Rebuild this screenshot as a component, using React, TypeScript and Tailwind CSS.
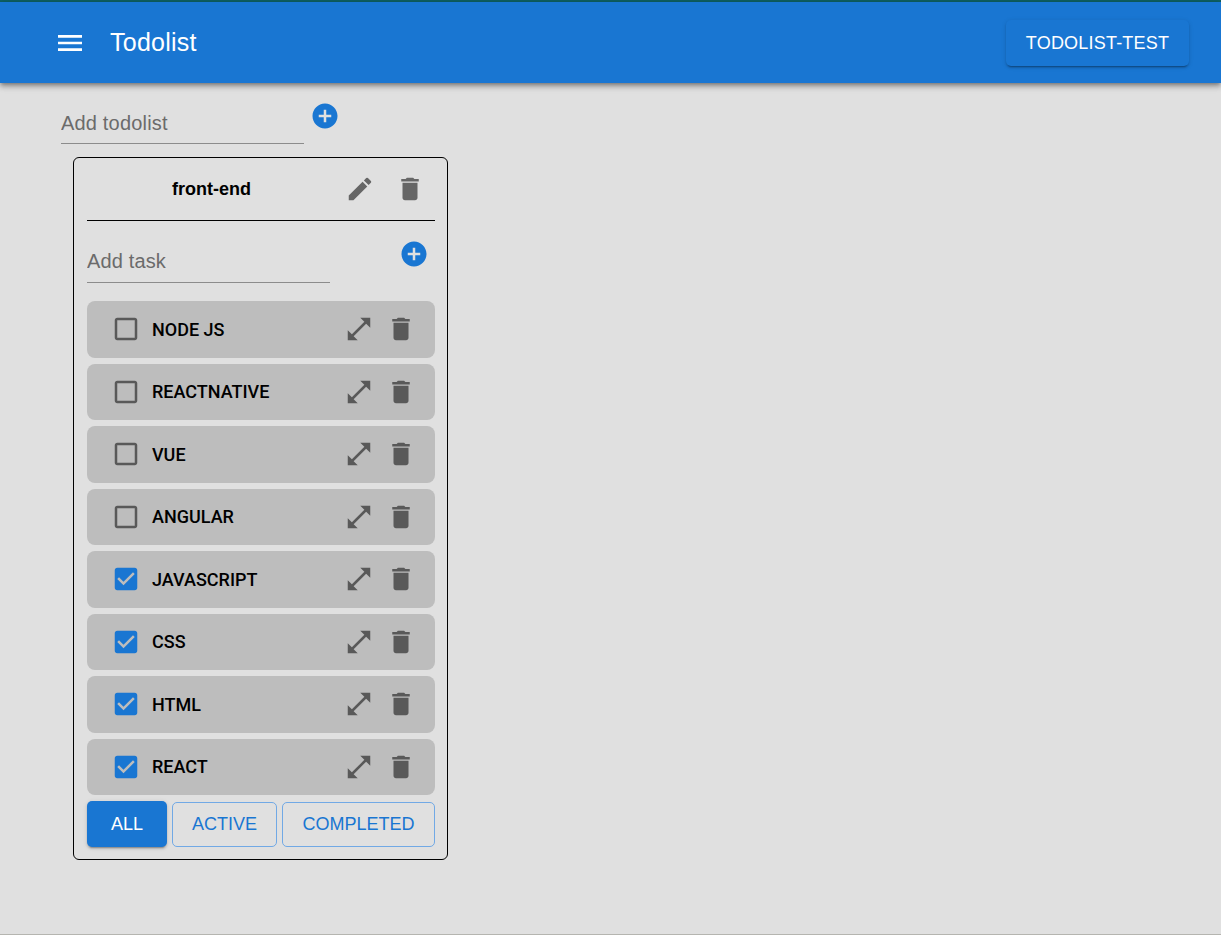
import { CSSProperties } from "react";

const icons = {
  menu: "M3 18h18v-2H3v2zm0-5h18v-2H3v2zm0-7v2h18V6H3z",
  add: "M12 2C6.48 2 2 6.48 2 12s4.48 10 10 10 10-4.48 10-10S17.52 2 12 2zm5 11h-4v4h-2v-4H7v-2h4V7h2v4h4v2z",
  edit: "M3 17.25V21h3.75L17.81 9.94l-3.75-3.75L3 17.25zM20.71 7.04c.39-.39.39-1.02 0-1.41l-2.34-2.34a.9959.9959 0 0 0-1.41 0l-1.83 1.83 3.75 3.75 1.83-1.83z",
  trash: "M6 19c0 1.1.9 2 2 2h8c1.1 0 2-.9 2-2V7H6v12zM19 4h-3.5l-1-1h-5l-1 1H5v2h14V4z",
  expand: "M21 11V3h-8l3.29 3.29-10 10L3 13v8h8l-3.29-3.29 10-10z",
  unchecked: "M19 5v14H5V5h14m0-2H5c-1.1 0-2 .9-2 2v14c0 1.1.9 2 2 2h14c1.1 0 2-.9 2-2V5c0-1.1-.9-2-2-2z",
  checked: "M19 3H5c-1.11 0-2 .9-2 2v14c0 1.1.89 2 2 2h14c1.1 0 2-.9 2-2V5c0-1.1-.9-2-2-2zm-9 14l-5-5 1.41-1.41L10 14.17l7.59-7.59L19 8l-9 9z",
};

const Icon = ({ d, className, style }: { d: string; className?: string; style?: CSSProperties }) => (
  <svg viewBox="0 0 24 24" className={className} style={style} fill="currentColor">
    <path d={d} />
  </svg>
);

const tasks = [
  { title: "NODE JS", done: false },
  { title: "REACTNATIVE", done: false },
  { title: "VUE", done: false },
  { title: "ANGULAR", done: false },
  { title: "JAVASCRIPT", done: true },
  { title: "CSS", done: true },
  { title: "HTML", done: true },
  { title: "REACT", done: true },
];

const TaskRow = ({ title, done }: { title: string; done: boolean }) => (
  <div className="flex h-[56.5px] items-center rounded-[8px] bg-[#bdbdbd] pl-[24px]">
    <Icon
      d={done ? icons.checked : icons.unchecked}
      className={done ? "h-[30px] w-[30px] text-[#1976d2]" : "h-[30px] w-[30px] text-[#595959]"}
    />
    <span className="ml-[11px] flex-1 font-['Roboto',sans-serif] text-[18px] font-medium text-black">{title}</span>
    <Icon d={icons.expand} className="h-[30px] w-[30px] text-[#595959]" />
    <Icon d={icons.trash} className="ml-[12px] mr-[19px] h-[30px] w-[30px] text-[#595959]" />
  </div>
);

const App = () => {
  return (
    <div className="flex h-[935px] flex-col overflow-hidden border-b border-[#b5b5b0] bg-[#e0e0e0] font-['Liberation_Sans',sans-serif]">
      {/* Header */}
      <div className="h-[2px] bg-[#0f6163]" />
      <header className="z-10 flex h-[81px] items-center justify-between bg-[#1976d2] pl-[54px] pr-[32px] shadow-[0_2px_4px_-1px_rgba(0,0,0,0.3),0_4px_5px_0_rgba(0,0,0,0.2),0_1px_10px_0_rgba(0,0,0,0.14)]">
        <div className="flex items-center">
          <Icon d={icons.menu} className="h-[32px] w-[32px] text-white" />
          <h1 className="ml-[24px] pt-[1px] text-[25px] font-normal tracking-[0.25px] text-white">Todolist</h1>
        </div>
        <button className="h-[46px] w-[183px] rounded-[5px] bg-[#1976d2] pt-[1px] text-[18px] tracking-[0.2px] text-white shadow-[0_3px_1px_-2px_rgba(0,0,0,0.2),0_2px_2px_0_rgba(0,0,0,0.14),0_1px_5px_0_rgba(0,0,0,0.12)]">
          TODOLIST-TEST
        </button>
      </header>

      {/* Add todolist */}
      <div className="ml-[61px] mt-[21px] flex items-start">
        <input
          placeholder="Add todolist"
          className="h-[40px] w-[243px] border-b border-[#8c8c8c] bg-transparent text-[20px] tracking-[0.18px] outline-none placeholder:text-[#6b6b6b]"
        />
        <Icon d={icons.add} className="-mt-[3px] ml-[6px] h-[30px] w-[30px] text-[#1976d2]" />
      </div>

      {/* Card */}
      <div className="ml-[73px] mt-[13px] w-[375px] rounded-[6px] border border-black pb-[12px] pl-[13px] pr-[12px]">
        <div className="flex h-[63px] items-center border-b border-black">
          <span className="ml-[85px] flex-1 text-[18px] font-bold text-black">front-end</span>
          <Icon d={icons.edit} className="h-[30px] w-[30px] text-[#666666]" />
          <Icon d={icons.trash} className="ml-[20px] mr-[10px] h-[30px] w-[30px] text-[#666666]" />
        </div>
        <div className="mt-[20px] flex items-start justify-between">
          <input
            placeholder="Add task"
            className="h-[42px] w-[243px] border-b border-[#8c8c8c] bg-transparent text-[20px] tracking-[0.15px] outline-none placeholder:text-[#6b6b6b]"
          />
          <Icon d={icons.add} className="mr-[6px] h-[30px] w-[30px] -translate-y-[2px] text-[#1976d2]" />
        </div>
        <div className="mt-[18px] flex flex-col gap-[6px]">
          {tasks.map((t) => (
            <TaskRow key={t.title} title={t.title} done={t.done} />
          ))}
        </div>
        <div className="mt-[6px] flex items-end gap-[5px]">
          <button className="h-[46px] w-[80px] rounded-[5px] bg-[#1976d2] text-[18px] text-white shadow-[0_3px_1px_-2px_rgba(0,0,0,0.2),0_2px_2px_0_rgba(0,0,0,0.14),0_1px_5px_0_rgba(0,0,0,0.12)]">
            ALL
          </button>
          <button className="h-[45px] w-[105px] rounded-[5px] border border-[#71a9e5] text-[18px] text-[#1976d2]">
            ACTIVE
          </button>
          <button className="h-[45px] w-[153px] rounded-[5px] border border-[#71a9e5] text-[18px] text-[#1976d2]">
            COMPLETED
          </button>
        </div>
      </div>
    </div>
  );
};

export default App;
